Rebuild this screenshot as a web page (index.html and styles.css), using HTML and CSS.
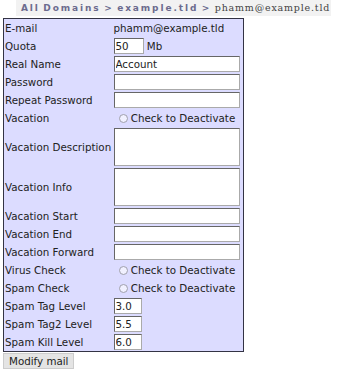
FILE: index.html
```html
<!DOCTYPE html>
<html>
<head>
  <title>Modify mail</title>
  <link rel="stylesheet" href="styles.css">
</head>
<body>
  <div class="breadcrumb">
    <a href="#">All Domains</a> &gt; <a href="#">example.tld</a> &gt; <span class="current">phamm@example.tld</span>
  </div>
  <form id="mail-form">
    <table class="mail-table">
      <colgroup><col class="label-col"><col></colgroup>
      <tr><td>E-mail</td><td>phamm@example.tld</td></tr>
      <tr><td>Quota</td><td><input type="text" class="short" value="50"> Mb</td></tr>
      <tr><td>Real Name</td><td><input type="text" class="wide filled" value="Account"></td></tr>
      <tr><td>Password</td><td><input type="password" class="wide"></td></tr>
      <tr><td>Repeat Password</td><td><input type="password" class="wide"></td></tr>
      <tr><td>Vacation</td><td><label class="check"><input type="radio"> Check to Deactivate</label></td></tr>
      <tr class="tall"><td>Vacation Description</td><td><textarea class="wide"></textarea></td></tr>
      <tr class="tall"><td>Vacation Info</td><td><textarea class="wide"></textarea></td></tr>
      <tr><td>Vacation Start</td><td><input type="text" class="wide"></td></tr>
      <tr><td>Vacation End</td><td><input type="text" class="wide"></td></tr>
      <tr><td>Vacation Forward</td><td><input type="text" class="wide"></td></tr>
      <tr><td>Virus Check</td><td><label class="check"><input type="radio"> Check to Deactivate</label></td></tr>
      <tr><td>Spam Check</td><td><label class="check"><input type="radio"> Check to Deactivate</label></td></tr>
      <tr><td>Spam Tag Level</td><td><input type="text" class="level" value="3.0"></td></tr>
      <tr><td>Spam Tag2 Level</td><td><input type="text" class="level" value="5.5"></td></tr>
      <tr><td>Spam Kill Level</td><td><input type="text" class="level" value="6.0"></td></tr>
    </table>
    <button type="submit">Modify mail</button>
  </form>
</body>
</html>
```

FILE: styles.css
```css
body {
  font-family: "DejaVu Sans", sans-serif;
  font-size: 10.3px;
  color: #222;
  background-color: #fff;
  margin: 0 3px;
}

.breadcrumb {
  background-color: #f2f2f2;
  margin: 0 16px 0 13px;
  padding: 0 5px;
  height: 16px;
  line-height: 15px;
  font-size: 9px;
  font-weight: bold;
  letter-spacing: 1.9px;
  word-spacing: -1.5px;
  color: #6b6b8e;
  white-space: nowrap;
}

.breadcrumb a {
  color: #6b6b8e;
  text-decoration: none;
}

.breadcrumb .current {
  font-family: "DejaVu Serif", serif;
  font-size: 9.5px;
  font-weight: normal;
  letter-spacing: 0.8px;
  word-spacing: 0;
  color: #444;
}

.mail-table {
  margin-top: 2px;
  width: 241px;
  table-layout: fixed;
  background-color: #dcdcff;
  border: 1px solid #333344;
  border-collapse: collapse;
}

.mail-table .label-col {
  width: 109px;
}

.mail-table td {
  padding: 0 1px;
  height: 18px;
  white-space: nowrap;
}

.mail-table tr.tall td {
  height: 40px;
}

.mail-table input[type="text"],
.mail-table input[type="password"],
.mail-table textarea {
  font-family: "DejaVu Sans", sans-serif;
  font-size: 10.3px;
  color: #222;
  margin: 0;
  padding: 0 1px;
  height: 16px;
  box-sizing: border-box;
  border: 1px solid #aaa;
  border-top-color: #666;
  border-left-color: #666;
  background-color: #fff;
}

.mail-table .wide {
  width: 126px;
}

.mail-table .filled {
  background-color: #fdf0c0;
}

.mail-table .short {
  width: 30px;
  margin-right: 5px;
}

.mail-table .level {
  width: 28px;
}

.mail-table textarea {
  height: 38px;
  resize: none;
  vertical-align: middle;
}

.check input {
  margin: 0 0 0 5px;
  width: 9px;
  height: 9px;
  vertical-align: -1px;
  opacity: 0.6;
}

button {
  font-family: "DejaVu Sans", sans-serif;
  font-size: 10.3px;
  background-color: #e4e4e4;
  border: 1px solid #ccc;
  padding: 1px 5px;
  margin-top: 1px;
  color: #222;
}
```
